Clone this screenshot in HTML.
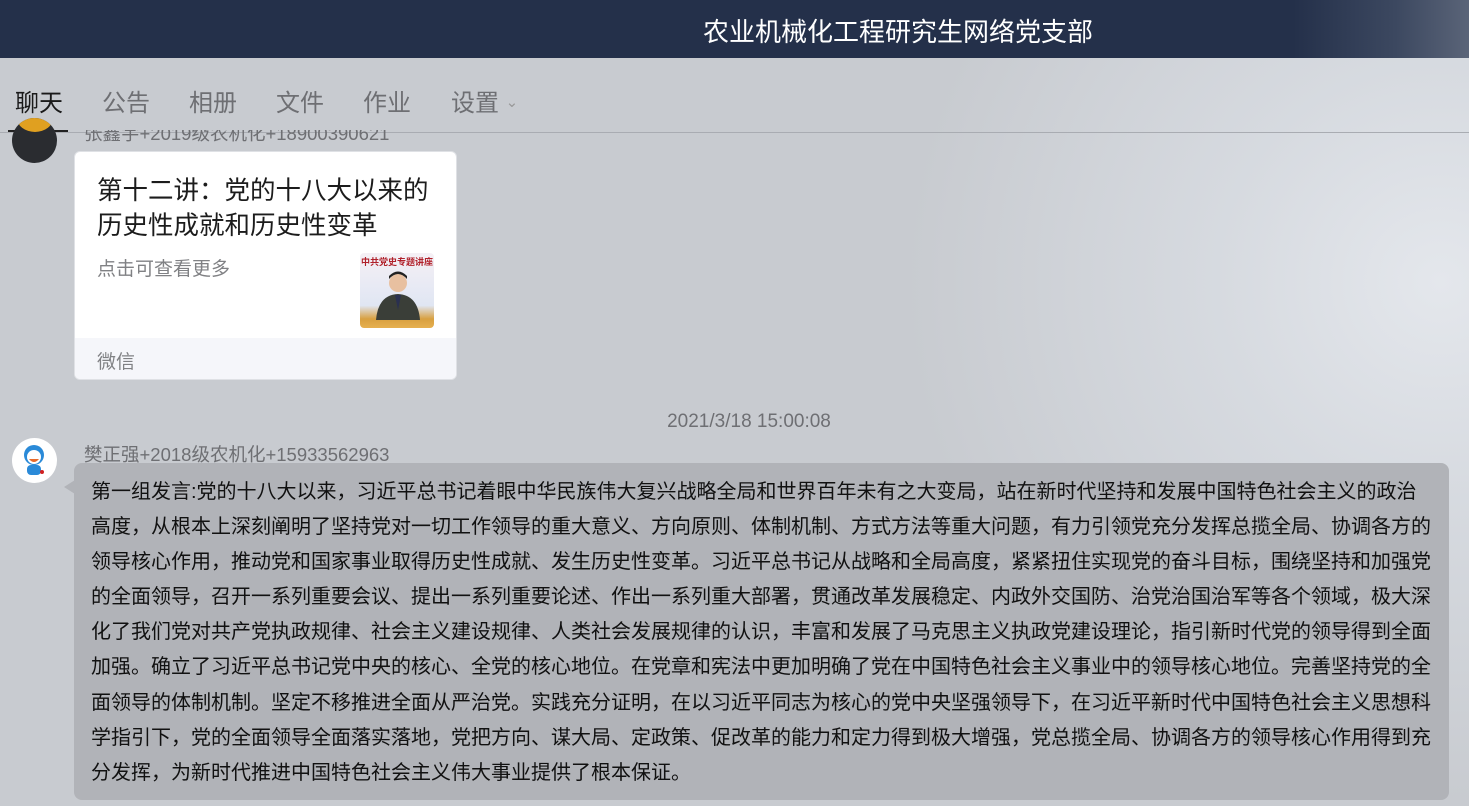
<!DOCTYPE html>
<html><head><meta charset="utf-8">
<style>
*{margin:0;padding:0;box-sizing:border-box}
body{width:1469px;height:806px;overflow:hidden;position:relative;font-family:"Liberation Sans","Noto Sans CJK SC",sans-serif;background:#c8cbd0}
.bgr{position:absolute;left:900px;top:0;width:569px;height:806px;background:radial-gradient(ellipse at 95% 35%,#e4e7ec 0%,rgba(220,224,230,.7) 30%,rgba(200,203,208,0) 70%)}
.hdr{position:absolute;left:0;top:0;width:1469px;height:58px;background:linear-gradient(90deg,#24304a 0%,#24304a 88%,#3c4860 95%,#5a6478 100%)}
.hdr span{position:absolute;left:0;width:1796px;text-align:center;top:12px;color:#fff;font-size:26px}
.tabs{position:absolute;top:83px;left:0;font-size:24px;color:#6e6f73}
.tabs span{position:absolute;white-space:nowrap}
.line{position:absolute;left:0;top:132px;width:1469px;height:1px;background:#a9acb2}
.act{position:absolute;left:8px;top:130px;width:60px;height:2px;background:#222}
.av1{position:absolute;left:12px;top:118px;width:45px;height:45px;border-radius:50%;background:#2a2c30;overflow:hidden}
.av1:before{content:"";position:absolute;left:5px;top:-14px;width:36px;height:28px;border-radius:50%;background:#e0a020}
.name1{position:absolute;left:84px;top:120px;font-size:18.5px;color:#6e6f73;clip-path:inset(10px 0 0 0);white-space:nowrap}
.card{position:absolute;left:74px;top:151px;width:383px;height:229px;background:#fff;border-radius:6px;overflow:hidden;border:1px solid #dfe1e5}
.card .t{position:absolute;left:22px;top:22px;font-size:25.5px;line-height:35px;color:#1c1c1c;width:340px}
.card .s{position:absolute;left:22px;top:102px;font-size:19px;color:#808184}
.card .th{position:absolute;left:285px;top:101px;width:74px;height:75px;border-radius:4px;background:linear-gradient(#f5f0f5,#e0e6f3 70%,#d8a040 88%,#e6b050);overflow:hidden}
.card .ft{position:absolute;left:0;top:186px;width:383px;height:43px;background:#f5f6fa;font-size:19px;color:#808184;padding:9px 22px}
.time{position:absolute;left:0;width:1498px;text-align:center;top:411px;font-size:19px;color:#6e6f73}
.av2{position:absolute;left:12px;top:438px;width:45px;height:45px;border-radius:50%;background:#fff}
.name2{position:absolute;left:84px;top:441px;font-size:18.5px;color:#6e6f73;white-space:nowrap}
.bub{position:absolute;left:74px;top:463px;width:1375px;height:337px;background:#b1b3b8;border-radius:8px}
.tail{position:absolute;left:64px;top:480px;width:0;height:0;border-top:7px solid transparent;border-bottom:7px solid transparent;border-right:11px solid #b1b3b8}
.msg{position:absolute;left:91px;top:475px;font-size:20px;line-height:35.1px;color:#111}
.msg div{white-space:nowrap}
</style></head><body>
<div class="bgr"></div>
<div class="hdr"><span>农业机械化工程研究生网络党支部</span></div>
<div class="tabs">
<span style="left:15px;color:#1a1a1a">聊天</span>
<span style="left:102px">公告</span>
<span style="left:189px">相册</span>
<span style="left:276px">文件</span>
<span style="left:363px">作业</span>
<span style="left:451px">设置 <small style="font-size:15px;vertical-align:4px;color:#999">&#8964;</small></span>
</div>
<div class="line"></div><div class="act"></div>
<div class="av1"></div>
<div class="name1">张鑫宇+2019级农机化+18900390621</div>
<div class="card">
<div class="t">第十二讲：党的十八大以来的历史性成就和历史性变革</div>
<div class="s">点击可查看更多</div>
<div class="th"><div style="font-size:9px;color:#b0202a;text-align:center;margin-top:2px;white-space:nowrap;font-weight:bold">中共党史专题讲座</div>
<svg width="74" height="60" style="position:absolute;left:0;top:12px"><circle cx="38" cy="18" r="9" fill="#e8c0a0"/><path d="M29 14 Q38 4 47 14 L47 11 Q38 2 29 11Z" fill="#222"/><path d="M16 55 Q18 30 38 29 Q58 30 60 55Z" fill="#3a3e38"/><path d="M35 30 L38 45 L41 30Z" fill="#2a3050"/></svg></div>
<div class="ft">微信</div>
</div>
<div class="time">2021/3/18 15:00:08</div>
<div class="av2"><svg width="45" height="45"><circle cx="22" cy="17" r="10" fill="#2a8ad8"/><circle cx="22" cy="19" r="7" fill="#fff"/><path d="M17 21 Q22 27 27 21Z" fill="#e86a2a"/><rect x="15" y="27" width="14" height="10" rx="4" fill="#2a8ad8"/><circle cx="30" cy="34" r="2" fill="#d02020"/></svg></div>
<div class="name2">樊正强+2018级农机化+15933562963</div>
<div class="tail"></div>
<div class="bub"></div>
<div class="msg">
<div>第一组发言:党的十八大以来，习近平总书记着眼中华民族伟大复兴战略全局和世界百年未有之大变局，站在新时代坚持和发展中国特色社会主义的政治</div>
<div>高度，从根本上深刻阐明了坚持党对一切工作领导的重大意义、方向原则、体制机制、方式方法等重大问题，有力引领党充分发挥总揽全局、协调各方的</div>
<div>领导核心作用，推动党和国家事业取得历史性成就、发生历史性变革。习近平总书记从战略和全局高度，紧紧扭住实现党的奋斗目标，围绕坚持和加强党</div>
<div>的全面领导，召开一系列重要会议、提出一系列重要论述、作出一系列重大部署，贯通改革发展稳定、内政外交国防、治党治国治军等各个领域，极大深</div>
<div>化了我们党对共产党执政规律、社会主义建设规律、人类社会发展规律的认识，丰富和发展了马克思主义执政党建设理论，指引新时代党的领导得到全面</div>
<div>加强。确立了习近平总书记党中央的核心、全党的核心地位。在党章和宪法中更加明确了党在中国特色社会主义事业中的领导核心地位。完善坚持党的全</div>
<div>面领导的体制机制。坚定不移推进全面从严治党。实践充分证明，在以习近平同志为核心的党中央坚强领导下，在习近平新时代中国特色社会主义思想科</div>
<div>学指引下，党的全面领导全面落实落地，党把方向、谋大局、定政策、促改革的能力和定力得到极大增强，党总揽全局、协调各方的领导核心作用得到充</div>
<div>分发挥，为新时代推进中国特色社会主义伟大事业提供了根本保证。</div>
</div>
</body></html>
